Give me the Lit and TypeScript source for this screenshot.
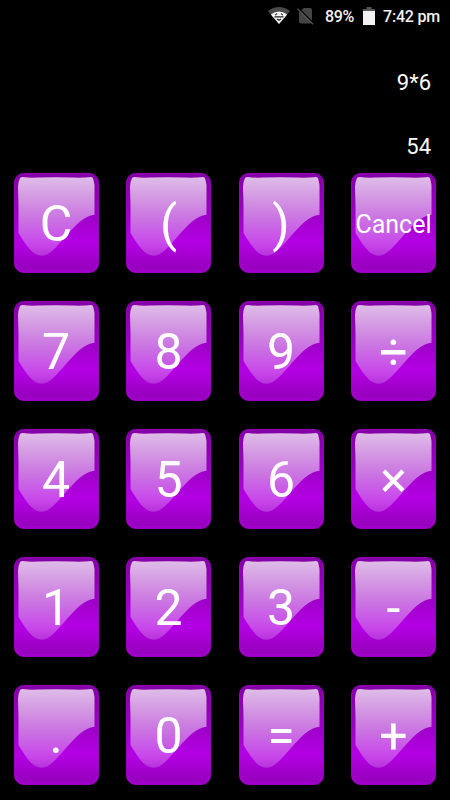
import { LitElement, html, svg, css } from "lit";
import { customElement, property } from "lit/decorators.js";

@customElement("status-bar")
class StatusBar extends LitElement {
  static styles = css`
    :host { display: flex; align-items: center; justify-content: flex-end; height: 32px; padding-right: 10px; box-sizing: border-box; color: #f2f2f2; font: 500 16px Roboto, sans-serif; }
    svg { display: block; flex: none; }
    .wifi { margin-right: 7px; }
    .sim { margin-right: 11px; }
    .level { letter-spacing: -0.35px; }
    .battery { margin: 0 8px 0 9px; }
    .time { letter-spacing: -0.2px; }
  `;
  render() {
    return html`
      <svg class="wifi" width="22" height="18" viewBox="0 0 22 18">
        <path d="M0 4Q11-4 22 4L11 17Z" fill="#4a4a4a" />
        <path d="M2.8 7.4Q11 1.8 19.2 7.4L11 17Z" fill="#f2f2f2" />
        <path d="M7.2 8L9 6.6M14.8 8L13 6.6M6.5 9.8h9M9 12l2 1.2 2-1.2" fill="none" stroke="#222" stroke-width="1.2" />
      </svg>
      <svg class="sim" width="17" height="18" viewBox="0 0 17 18">
        <path d="M6.5 1H13q2 0 2 2V14.5q0 2-2 2H4q-2 0-2-2V5.5Z" fill="#444" />
        <path d="M1 .8L17 16.8" stroke="#000" stroke-width="1.5" />
        <path d="M.5 1.8L16 17.3" stroke="#555" stroke-width="1.3" />
      </svg>
      <span class="level">89%</span>
      <svg class="battery" width="12" height="18" viewBox="0 0 12 18">
        <path d="M3.5 0h5v2H12v3H0V2h3.5Z" fill="#555" />
        <path d="M0 4h12v14H0Z" fill="#f2f2f2" />
      </svg>
      <span class="time">7:42 pm</span>
    `;
  }
}

@customElement("glossy-key")
class GlossyKey extends LitElement {
  @property() label = "";
  @property({ type: Boolean, reflect: true }) small = false;
  static styles = css`
    :host { display: grid; place-items: center; width: 85px; height: 100px; color: #fff; font: 50px/1 Roboto, sans-serif; }
    :host([small]) { font-size: 25px; }
    svg, .label { grid-area: 1 / 1; }
    svg { display: block; }
    .label { white-space: nowrap; z-index: 1; padding-top: 2px; }
  `;
  render() {
    return html`
      <svg width="85" height="100" viewBox="0 0 85 100">
        <defs>
          <linearGradient id="body" x2="0" y2="1">
            <stop offset="0" stop-color="#8300a4" />
            <stop offset=".4" stop-color="#9c00c6" />
            <stop offset=".7" stop-color="#b400e4" />
            <stop offset="1" stop-color="#9200b8" />
          </linearGradient>
          <linearGradient id="gloss" x2="0" y2="1">
            <stop offset="0" stop-color="#fff" stop-opacity=".74" />
            <stop offset="1" stop-color="#fff" stop-opacity=".2" />
          </linearGradient>
        </defs>
        ${svg`
          <rect x=".5" y=".5" width="84" height="99" rx="9" fill="url(#body)" stroke="#9a00bf" />
          <path d="M2 91Q3 98 9 98H76Q82 98 83 91" fill="none" stroke="#b000db" />
          <path d="M6 5Q7 4 9 4Q16 5 24 4.5Q42 4 58 4.5Q68 5 77 4Q79 4 79.5 7L80.5 12V41.8C70 43 62 52 52.5 62.5C43 73 36 82.7 27.5 82.7C19 82.7 13 74 4.5 60V32L4 14Q4 9 6 5Z" fill="url(#gloss)" />
        `}
      </svg>
      <span class="label">${this.label}</span>
    `;
  }
}

@customElement("app-root")
class AppRoot extends LitElement {
  static styles = css`
    :host { display: flex; flex-direction: column; width: 450px; height: 800px; background: #000; overflow: hidden; }
    .display { display: flex; flex-direction: column; align-items: flex-end; height: 141px; padding: 19px 19px 0 0; box-sizing: border-box; color: #fff; font: 22px/64px Roboto, sans-serif; }
    .keys { display: grid; grid-template-columns: repeat(4, 85px); grid-auto-rows: 100px; gap: 28px 27.5px; padding-left: 13.5px; }
  `;
  render() {
    const keys = ["C", "(", ")", "Cancel", "7", "8", "9", "÷", "4", "5", "6", "×", "1", "2", "3", "-", ".", "0", "=", "+"];
    return html`
      <status-bar></status-bar>
      <div class="display"><div>9*6</div><div>54</div></div>
      <div class="keys">${keys.map((k) => html`<glossy-key .label=${k} ?small=${k.length > 1}></glossy-key>`)}</div>
    `;
  }
}
